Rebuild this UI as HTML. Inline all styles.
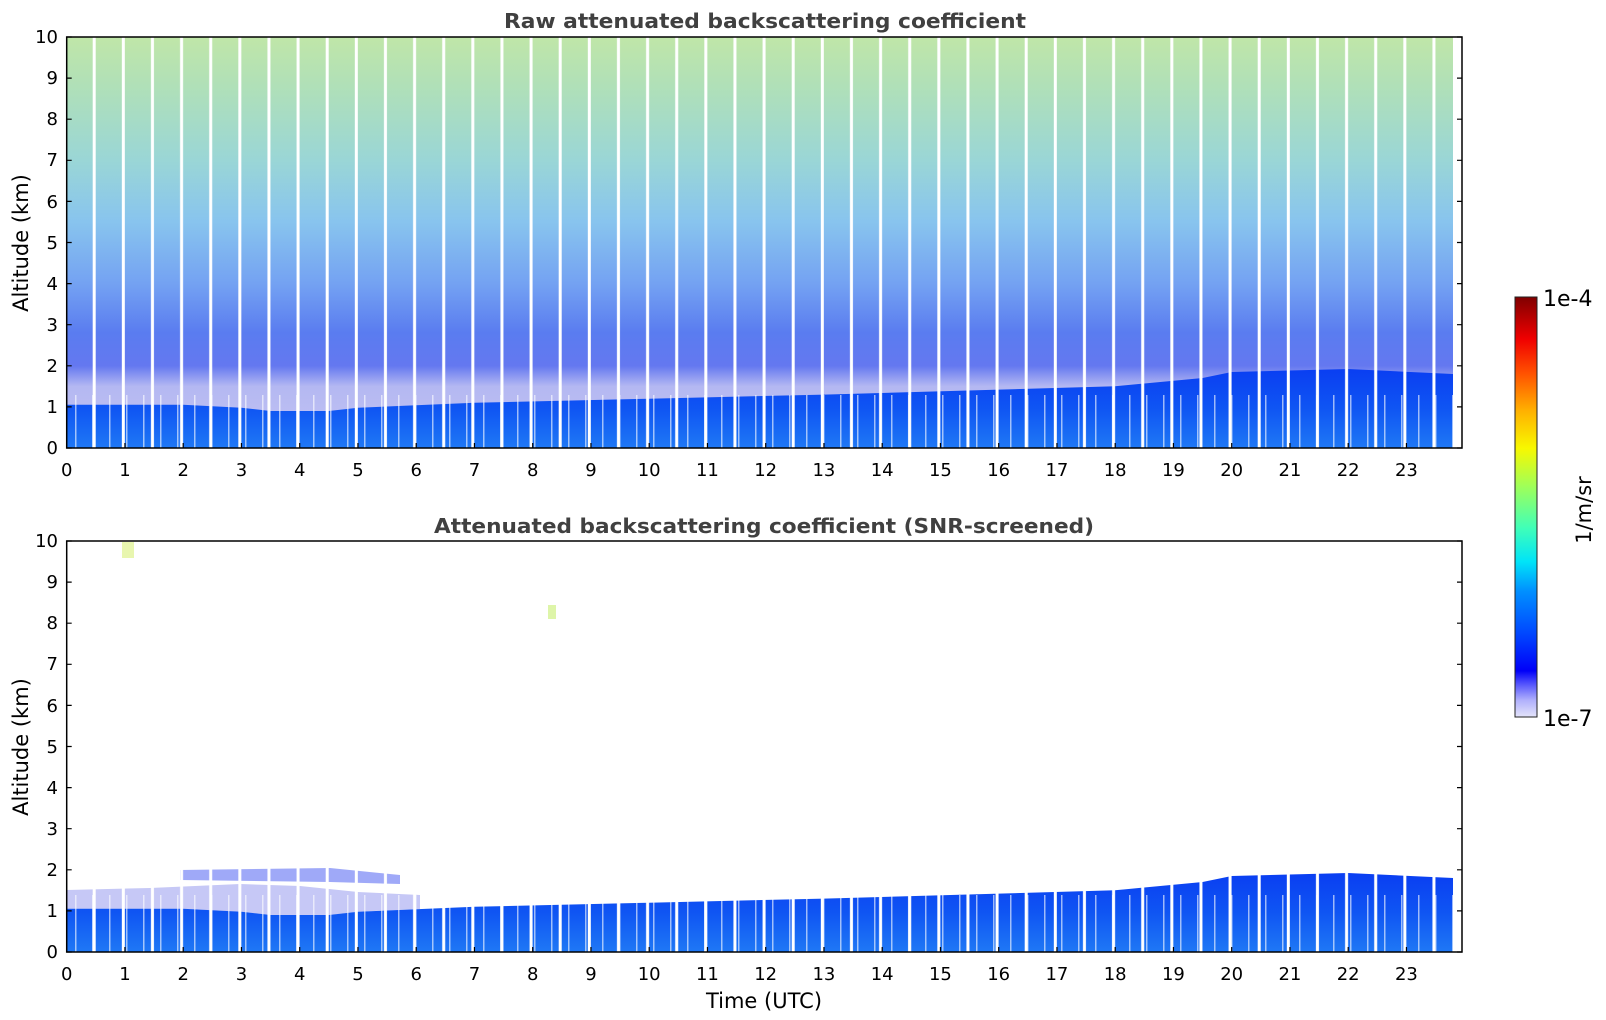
<!DOCTYPE html>
<html><head><meta charset="utf-8"><style>html,body{margin:0;padding:0;background:#fff;}svg{display:block;font-family:"DejaVu Sans","Liberation Sans",sans-serif;}</style></head>
<body>
<svg width="1606" height="1020" viewBox="0 0 1606 1020" xmlns="http://www.w3.org/2000/svg">
<defs>
<linearGradient id="sky" x1="0" y1="0" x2="0" y2="1">
<stop offset="0" stop-color="#c0e6a8"/>
<stop offset="0.12" stop-color="#b0e0b8"/>
<stop offset="0.3" stop-color="#9ad6d6"/>
<stop offset="0.45" stop-color="#88c4ee"/>
<stop offset="0.6" stop-color="#74a2f2"/>
<stop offset="0.72" stop-color="#5a7cf0"/>
<stop offset="0.8" stop-color="#6478f0"/>
<stop offset="0.85" stop-color="#b4b8f2"/>
<stop offset="1" stop-color="#c4c4f4"/>
</linearGradient>
<linearGradient id="pbl" x1="0" y1="0" x2="0" y2="1">
<stop offset="0" stop-color="#0a3ef2"/>
<stop offset="0.5" stop-color="#0f55f3"/>
<stop offset="1" stop-color="#1f78f5"/>
</linearGradient>
<linearGradient id="cb" x1="0" y1="1" x2="0" y2="0">
<stop offset="0" stop-color="#e4e4fa"/>
<stop offset="0.04" stop-color="#b0b0fc"/>
<stop offset="0.08" stop-color="#5050fc"/>
<stop offset="0.11" stop-color="#0000f8"/>
<stop offset="0.2" stop-color="#0048ff"/>
<stop offset="0.3" stop-color="#0090ff"/>
<stop offset="0.37" stop-color="#00e4f8"/>
<stop offset="0.45" stop-color="#40ffb8"/>
<stop offset="0.55" stop-color="#a0ff58"/>
<stop offset="0.64" stop-color="#f8f800"/>
<stop offset="0.73" stop-color="#ffb000"/>
<stop offset="0.82" stop-color="#ff5000"/>
<stop offset="0.9" stop-color="#f00000"/>
<stop offset="1" stop-color="#800000"/>
</linearGradient>
<pattern id="stripes" x="66.7" y="0" width="29.125" height="10" patternUnits="userSpaceOnUse">
<rect x="26" y="0" width="3" height="10" fill="#fff"/>
</pattern>
<pattern id="stripes2" x="80" y="0" width="17" height="10" patternUnits="userSpaceOnUse">
<rect x="12" y="0" width="1.5" height="10" fill="#fff"/>
</pattern>
</defs>

<rect x="67" y="37" width="1386" height="411" fill="url(#sky)"/>
<polygon fill="url(#pbl)" points="67,404.8 183,404.8 241.5,407.7 270.6,411 328.8,411 358,407.7 474.5,402.8 649,398.7 824,394.6 999,389.6 1115,386.3 1202.6,378 1231.7,372 1348,369 1453,374 1453,448 67,448"/>
<rect x="67" y="37" width="1386" height="411" fill="url(#stripes)"/>
<rect x="67" y="395" width="1386" height="53" fill="url(#stripes2)" opacity="0.6"/>
<rect x="1453" y="37" width="9" height="411" fill="#fff"/>

<polygon fill="#b8bcf4" opacity="0.85" points="67,908 183,906 241.5,908 300,905 358,904 400,905 400,908.8 358,911.7 328.8,915 270.6,915 241.5,911.7 183,908.8 67,908.8"/>
<polygon fill="#c6c8f6" points="67,890 150,888 240,884 300,886 358,892 420,895 420,909 358,911.7 328.8,915 270.6,915 241.5,911.7 183,908.8 67,908.8"/>
<polygon fill="#2a40f0" opacity="0.45" points="180,870 330,868 400,875 400,884 330,882 180,880"/>
<polygon fill="url(#pbl)" points="67,908.8 183,908.8 241.5,911.7 270.6,915 328.8,915 358,911.7 474.5,906.8 649,902.7 824,898.6 999,893.6 1115,890.3 1202.6,882 1231.7,876 1348,873 1453,878 1453,952 67,952"/>
<rect x="67" y="860" width="1386" height="92" fill="url(#stripes)"/>
<rect x="67" y="895" width="1386" height="57" fill="url(#stripes2)" opacity="0.6"/>
<rect x="122" y="542" width="12" height="16" fill="#d8f07a" opacity="0.6"/>
<rect x="548" y="605" width="8" height="14" fill="#c8ee70" opacity="0.6"/>

<g fill="none" stroke="#000" stroke-width="1.5">
<rect x="66.7" y="37" width="1395.3" height="411"/>
<rect x="66.7" y="541" width="1395.3" height="411"/>
<rect x="1515" y="297" width="22" height="420" fill="url(#cb)" stroke="#222" stroke-width="1"/>
</g>

<g stroke="#000" stroke-width="1.2">
<path d="M66.7 448h5M66.7 406.9h5M66.7 365.8h5M66.7 324.7h5M66.7 283.6h5M66.7 242.5h5M66.7 201.4h5M66.7 160.3h5M66.7 119.2h5M66.7 78.1h5M66.7 37h5
M1462 448h-5M1462 406.9h-5M1462 365.8h-5M1462 324.7h-5M1462 283.6h-5M1462 242.5h-5M1462 201.4h-5M1462 160.3h-5M1462 119.2h-5M1462 78.1h-5M1462 37h-5"/>
<path transform="translate(0,504)" d="M66.7 448h5M66.7 406.9h5M66.7 365.8h5M66.7 324.7h5M66.7 283.6h5M66.7 242.5h5M66.7 201.4h5M66.7 160.3h5M66.7 119.2h5M66.7 78.1h5M66.7 37h5
M1462 448h-5M1462 406.9h-5M1462 365.8h-5M1462 324.7h-5M1462 283.6h-5M1462 242.5h-5M1462 201.4h-5M1462 160.3h-5M1462 119.2h-5M1462 78.1h-5M1462 37h-5"/>
<path d="M124.95 448v-5M183.2 448v-5M241.45 448v-5M299.7 448v-5M357.95 448v-5M416.2 448v-5M474.45 448v-5M532.7 448v-5M590.95 448v-5M649.2 448v-5M707.45 448v-5M765.7 448v-5M823.95 448v-5M882.2 448v-5M940.45 448v-5M998.7 448v-5M1056.95 448v-5M1115.2 448v-5M1173.45 448v-5M1231.7 448v-5M1289.95 448v-5M1348.2 448v-5M1406.45 448v-5"/>
<path transform="translate(0,504)" d="M124.95 448v-5M183.2 448v-5M241.45 448v-5M299.7 448v-5M357.95 448v-5M416.2 448v-5M474.45 448v-5M532.7 448v-5M590.95 448v-5M649.2 448v-5M707.45 448v-5M765.7 448v-5M823.95 448v-5M882.2 448v-5M940.45 448v-5M998.7 448v-5M1056.95 448v-5M1115.2 448v-5M1173.45 448v-5M1231.7 448v-5M1289.95 448v-5M1348.2 448v-5M1406.45 448v-5"/>
</g>

<g font-size="18" fill="#000" text-anchor="end">
<text x="58" y="454">0</text><text x="58" y="413">1</text><text x="58" y="372">2</text><text x="58" y="331">3</text><text x="58" y="290">4</text><text x="58" y="249">5</text><text x="58" y="208">6</text><text x="58" y="166">7</text><text x="58" y="125">8</text><text x="58" y="84">9</text><text x="58" y="43">10</text>
<g transform="translate(0,504)"><text x="58" y="454">0</text><text x="58" y="413">1</text><text x="58" y="372">2</text><text x="58" y="331">3</text><text x="58" y="290">4</text><text x="58" y="249">5</text><text x="58" y="208">6</text><text x="58" y="166">7</text><text x="58" y="125">8</text><text x="58" y="84">9</text><text x="58" y="43">10</text></g>
</g>
<g font-size="18" fill="#000" text-anchor="middle">
<g>
<text x="66.7" y="476">0</text><text x="124.95" y="476">1</text><text x="183.2" y="476">2</text><text x="241.45" y="476">3</text><text x="299.7" y="476">4</text><text x="357.95" y="476">5</text><text x="416.2" y="476">6</text><text x="474.45" y="476">7</text><text x="532.7" y="476">8</text><text x="590.95" y="476">9</text><text x="649.2" y="476">10</text><text x="707.45" y="476">11</text><text x="765.7" y="476">12</text><text x="823.95" y="476">13</text><text x="882.2" y="476">14</text><text x="940.45" y="476">15</text><text x="998.7" y="476">16</text><text x="1056.95" y="476">17</text><text x="1115.2" y="476">18</text><text x="1173.45" y="476">19</text><text x="1231.7" y="476">20</text><text x="1289.95" y="476">21</text><text x="1348.2" y="476">22</text><text x="1406.45" y="476">23</text>
</g>
<g transform="translate(0,504)">
<text x="66.7" y="476">0</text><text x="124.95" y="476">1</text><text x="183.2" y="476">2</text><text x="241.45" y="476">3</text><text x="299.7" y="476">4</text><text x="357.95" y="476">5</text><text x="416.2" y="476">6</text><text x="474.45" y="476">7</text><text x="532.7" y="476">8</text><text x="590.95" y="476">9</text><text x="649.2" y="476">10</text><text x="707.45" y="476">11</text><text x="765.7" y="476">12</text><text x="823.95" y="476">13</text><text x="882.2" y="476">14</text><text x="940.45" y="476">15</text><text x="998.7" y="476">16</text><text x="1056.95" y="476">17</text><text x="1115.2" y="476">18</text><text x="1173.45" y="476">19</text><text x="1231.7" y="476">20</text><text x="1289.95" y="476">21</text><text x="1348.2" y="476">22</text><text x="1406.45" y="476">23</text>
</g>
</g>

<g font-weight="bold" font-size="20" fill="#404040" text-anchor="middle">
<text x="765" y="28" textLength="522" lengthAdjust="spacingAndGlyphs">Raw attenuated backscattering coefficient</text>
<text x="764" y="533" textLength="660" lengthAdjust="spacingAndGlyphs">Attenuated backscattering coefficient (SNR-screened)</text>
</g>
<g font-size="21" fill="#000" text-anchor="middle">
<text transform="translate(28,243) rotate(-90)">Altitude (km)</text>
<text transform="translate(28,747) rotate(-90)">Altitude (km)</text>
<text x="764" y="1008">Time (UTC)</text>
<text transform="translate(1591,510) rotate(-90)">1/m/sr</text>
</g>
<g font-size="22" fill="#000">
<text x="1543" y="306">1e-4</text>
<text x="1543" y="726">1e-7</text>
</g>
</svg>
</body></html>
